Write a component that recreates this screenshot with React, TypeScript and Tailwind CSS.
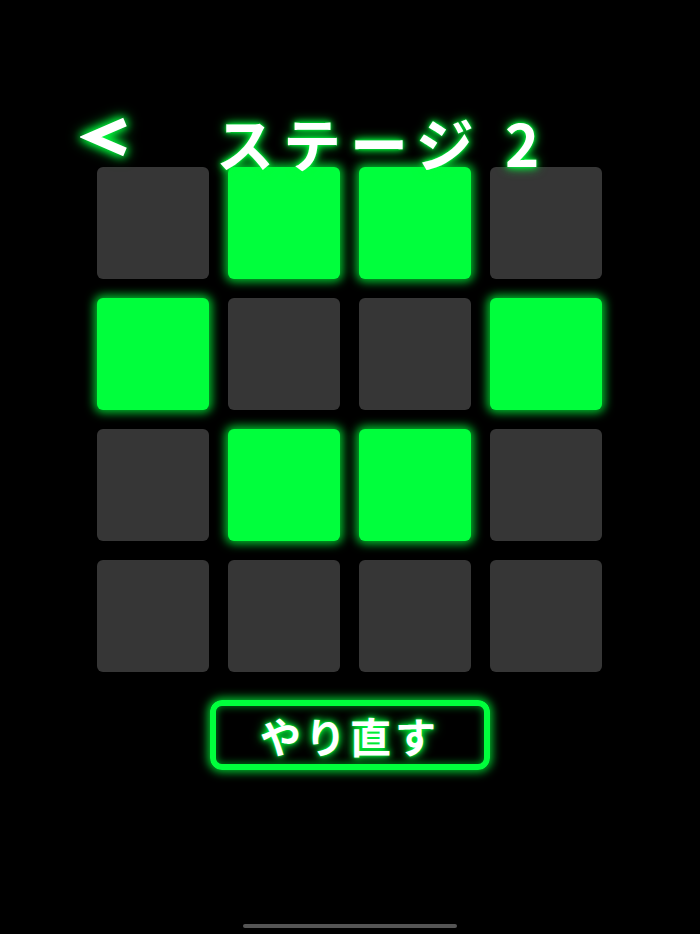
import React from "react";

const ON = new Set([1, 2, 4, 7, 9, 10]);

function Cell({ on }: { on: boolean }) {
  return (
    <div
      className={
        on
          ? "h-[112px] w-[112px] rounded-[6px] bg-[#00ff3c] shadow-[0_0_10px_3px_rgba(0,255,60,0.75)]"
          : "h-[112px] w-[112px] rounded-[6px] bg-[#363636]"
      }
    />
  );
}

function BackChevron() {
  return (
    <svg
      width="50"
      height="44"
      viewBox="0 0 50 44"
      className="[filter:drop-shadow(0_0_4px_#00ff3c)_drop-shadow(0_0_6px_#00ff3c)]"
    >
      <polyline
        points="45,7 10,22 45,37"
        fill="none"
        stroke="#ffffff"
        strokeWidth="9"
        strokeLinejoin="miter"
        strokeMiterlimit="10"
      />
    </svg>
  );
}

export default function App() {
  const glow =
    "[text-shadow:0_0_6px_#00ff3c,0_0_12px_#00ff3c,0_0_2px_#00ff3c]";
  return (
    <div
      className="relative flex h-[934px] w-[700px] flex-col items-center overflow-hidden bg-black"
      style={{ fontFamily: '"Noto Sans CJK JP", "Noto Sans", sans-serif' }}
    >
      <div className="relative z-10 flex h-[167px] w-full items-end">
        <div className="ml-[80px] mb-[8px]">
          <BackChevron />
        </div>
        <div
          className={`ml-[86px] mb-[-4px] text-[58px] font-bold leading-none tracking-[9px] text-white ${glow}`}
        >
          ステージ 2
        </div>
      </div>

      <div className="-ml-[1px] grid grid-cols-4 gap-[19px]">
        {Array.from({ length: 16 }, (_, i) => (
          <Cell key={i} on={ON.has(i)} />
        ))}
      </div>

      <button className="mt-[28px] flex h-[70px] w-[280px] items-center justify-center rounded-[12px] border-[6px] border-[#00ff3c] shadow-[0_0_10px_2px_rgba(0,255,60,0.8),inset_0_0_8px_rgba(0,255,60,0.6)]">
        <span
          className={`text-[41px] font-bold leading-none tracking-[4px] text-white ${glow}`}
        >
          やり直す
        </span>
      </button>

      <div className="absolute bottom-[6px] left-[243px] h-[4px] w-[214px] rounded-full bg-[#555555]" />
    </div>
  );
}
